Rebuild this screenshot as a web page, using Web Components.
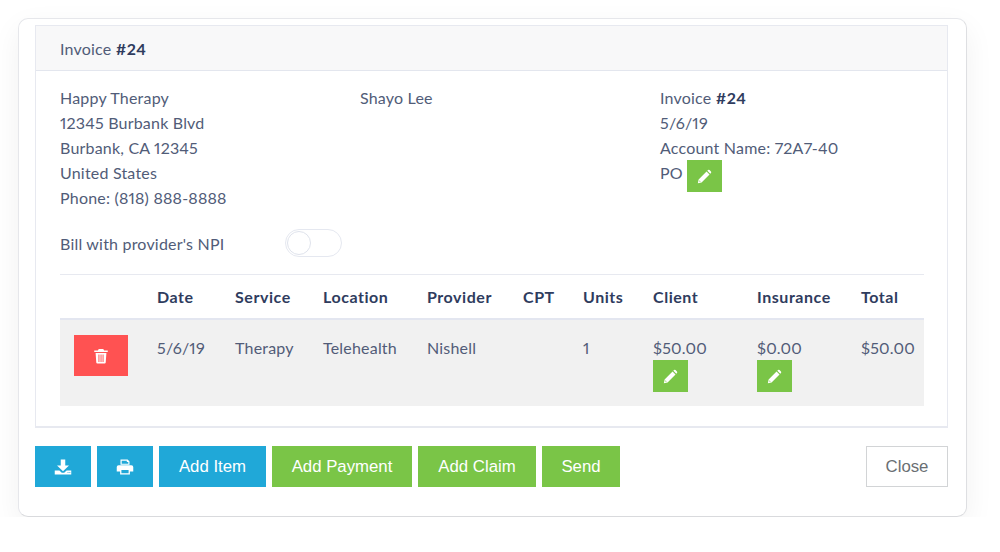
<!DOCTYPE html>
<html>
<head>
<meta charset="utf-8">
<title>Invoice</title>
<style>
    html, body { margin: 0; background: #fff; }
    body {
        font-family: Lato, sans-serif;
        font-size: 16px;
        font-variant-numeric: proportional-nums;
        letter-spacing: .2px;
        color: #515c78;
    }
    b { color: #2f3c5e; font-weight: 700; letter-spacing: .4px; }
</style>
</head>
<body>
<invoice-modal>
    <invoice-panel>
        <span slot="title">Invoice <b>#24</b></span>
        <address-block>
            <div>Happy Therapy</div>
            <div>12345 Burbank Blvd</div>
            <div>Burbank, CA 12345</div>
            <div>United States</div>
            <div>Phone: (818) 888-8888</div>
        </address-block>
        <address-block>
            <div>Shayo Lee</div>
        </address-block>
        <address-block>
            <div>Invoice <b>#24</b></div>
            <div>5/6/19</div>
            <div>Account Name: 72A7-40</div>
            <div class="po">PO <edit-button></edit-button></div>
        </address-block>
        <npi-toggle slot="toggle">Bill with provider's NPI</npi-toggle>
        <invoice-table slot="table"></invoice-table>
    </invoice-panel>
    <action-button slot="left" color="blue" icon="download" size="56"></action-button>
    <action-button slot="left" color="blue" icon="print" size="56"></action-button>
    <action-button slot="left" color="blue" size="107">Add Item</action-button>
    <action-button slot="left" color="green" size="140">Add Payment</action-button>
    <action-button slot="left" color="green" size="118">Add Claim</action-button>
    <action-button slot="left" color="green" size="78">Send</action-button>
    <action-button slot="right" color="plain" size="82">Close</action-button>
</invoice-modal>

<script>
const icons = {
    pencil: '<path d="M2.6 21.4l1.1-5.3L14.9 4.9l4.2 4.2L7.9 20.3zM4.7 19.3l1.9-.4-1.5-1.5zM16 3.8l.9-.9a1.6 1.6 0 0 1 2.2 0l2 2a1.6 1.6 0 0 1 0 2.2l-.9.9z" fill-rule="evenodd"/>',
    trash: '<path d="M9 2.5h6l1.2 2.3H21v2H3v-2h4.8zM4.8 8h14.4l-.9 12.6a1.5 1.5 0 0 1-1.5 1.4H7.2a1.5 1.5 0 0 1-1.5-1.4zM8.6 10v10h1.3V10zM11.4 10v10h1.3V10zM14.1 10v10h1.3V10z" fill-rule="evenodd"/>',
    download: '<path d="M9 2h6v8h5l-8 7.5L4 10h5zM1 16.5h6.2l3.2 3h3.2l3.2-3H23V22H1zM18 19v1h1.4v-1zM20.4 19v1h1.4v-1z" fill-rule="evenodd"/>',
    print: '<path d="M6 2h9.5L18 4.5V9H6zM7.6 3.6v3.9h8.8V5.2h-2V3.6zM3.5 9.5h17A2.5 2.5 0 0 1 23 12v6h-4.5v4h-13v-4H1v-6a2.5 2.5 0 0 1 2.5-2.5zM7.2 16v4.4h9.6V16z" fill-rule="evenodd"/>'
};
const svgIcon = (name, size) => `<svg viewBox="0 0 24 24" width="${size}" height="${size}" fill="#fff">${icons[name]}</svg>`;

class InvoiceModal extends HTMLElement {
    constructor() {
        super();
        this.attachShadow({mode: 'open'});
        this.shadowRoot.innerHTML = `
<style>
    :host {
        display: block;
        box-sizing: border-box;
        width: 949px;
        height: 499px;
        margin: 18px 0 0 18px;
        padding: 6px 18px 0 16px;
        background: #fff;
        border: 1px solid #e6e7eb;
        border-bottom-color: #d9dadd;
        border-right-color: #dedfe2;
        border-radius: 10px;
        box-shadow: 0 10px 30px rgba(0,0,0,.06);
    }
    .actions {
        display: flex;
        justify-content: space-between;
        margin-top: 18px;
    }
    .group { display: flex; gap: 6px; }
</style>
<slot></slot>
<div class="actions">
    <div class="group"><slot name="left"></slot></div>
    <div class="group"><slot name="right"></slot></div>
</div>`;
    }
}

class InvoicePanel extends HTMLElement {
    constructor() {
        super();
        this.attachShadow({mode: 'open'});
        this.shadowRoot.innerHTML = `
<style>
    :host {
        display: block;
        box-sizing: border-box;
        height: 403px;
        border: 1px solid #e7e9f0;
        border-bottom-width: 2px;
    }
    header {
        box-sizing: border-box;
        height: 45px;
        padding: 0 24px;
        display: flex;
        align-items: center;
        background: #f8f8f9;
        border-bottom: 1px solid #e3e6ee;
    }
    .body { padding: 14px 23px 0 24px; }
    .columns { display: grid; grid-template-columns: 300px 300px 1fr; }
</style>
<header><slot name="title"></slot></header>
<div class="body">
    <div class="columns"><slot></slot></div>
    <slot name="toggle"></slot>
    <slot name="table"></slot>
</div>`;
    }
}

class AddressBlock extends HTMLElement {
    constructor() {
        super();
        this.attachShadow({mode: 'open'});
        this.shadowRoot.innerHTML = `
<style>
    :host { display: block; line-height: 25px; }
    ::slotted(.po) { display: flex; align-items: flex-start; gap: 4px; }
</style>
<slot></slot>`;
    }
}

class EditButton extends HTMLElement {
    constructor() {
        super();
        this.attachShadow({mode: 'open'});
        this.shadowRoot.innerHTML = `
<style>
    :host {
        display: inline-flex;
        align-items: center;
        justify-content: center;
        width: 35px;
        height: 32px;
        background: #7ac547;
        vertical-align: middle;
    }
</style>
${svgIcon('pencil', 17)}`;
    }
}

class NpiToggle extends HTMLElement {
    constructor() {
        super();
        this.attachShadow({mode: 'open'});
        this.shadowRoot.innerHTML = `
<style>
    :host {
        display: flex;
        align-items: center;
        height: 28px;
        margin-top: 19px;
    }
    .label { width: 225px; }
    .track {
        box-sizing: border-box;
        width: 57px;
        height: 28px;
        padding: 1px;
        background: #fff;
        border: 1px solid #e5e8f0;
        border-radius: 14px;
    }
    .knob {
        box-sizing: border-box;
        width: 24px;
        height: 24px;
        background: #fff;
        border: 1px solid #dfe3ec;
        border-radius: 50%;
    }
</style>
<div class="label"><slot></slot></div>
<div class="track"><div class="knob"></div></div>`;
    }
}

class InvoiceTable extends HTMLElement {
    constructor() {
        super();
        this.attachShadow({mode: 'open'});
        const heads = ['', 'Date', 'Service', 'Location', 'Provider', 'CPT', 'Units', 'Client', 'Insurance', 'Total'];
        const cells = ['5/6/19', 'Therapy', 'Telehealth', 'Nishell', '', '1'];
        this.shadowRoot.innerHTML = `
<style>
    :host {
        display: block;
        margin-top: 17px;
        border-top: 1px solid #e7e9f0;
    }
    .row {
        display: grid;
        grid-template-columns: 97px 78px 88px 104px 96px 60px 70px 104px 104px 63px;
    }
    .head {
        height: 45px;
        align-items: center;
        font-weight: 700;
        letter-spacing: .55px;
        color: #2f3c5e;
        border-bottom: 2px solid #e3e6f0;
        box-sizing: border-box;
    }
    .line { height: 86px; background: #f1f1f1; }
    .line > div { padding-top: 15px; line-height: 25px; }
    .line > .del { padding: 15px 0 0 14px; }
    .del button {
        display: flex;
        align-items: center;
        justify-content: center;
        width: 54px;
        height: 41px;
        padding: 0;
        background: #ff5252;
        border: 0;
    }
    edit-button { display: flex; }
</style>
<div class="row head">${heads.map(h => `<div>${h}</div>`).join('')}</div>
<div class="row line">
    <div class="del"><button>${svgIcon('trash', 18)}</button></div>
    ${cells.map(c => `<div>${c}</div>`).join('')}
    <div>$50.00<edit-button></edit-button></div>
    <div>$0.00<edit-button></edit-button></div>
    <div>$50.00</div>
</div>`;
    }
}

class ActionButton extends HTMLElement {
    constructor() {
        super();
        this.attachShadow({mode: 'open'});
        const icon = this.getAttribute('icon');
        const bg = {blue: '#20a8d8', green: '#7ac547', plain: '#fff'}[this.getAttribute('color')];
        const plain = this.getAttribute('color') == 'plain';
        this.shadowRoot.innerHTML = `
<style>
    :host {
        display: flex;
        align-items: center;
        justify-content: center;
        box-sizing: border-box;
        width: ${this.getAttribute('size')}px;
        height: 41px;
        background: ${bg};
        color: ${plain ? '#6a6f73' : '#fff'};
        border: ${plain ? '1px solid #d2d4d6' : '0'};
        font-family: "Liberation Sans", Arial, sans-serif;
        font-size: 16.8px;
        letter-spacing: 0;
    }
</style>
${icon ? svgIcon(icon, 18) : '<slot></slot>'}`;
    }
}

customElements.define('edit-button', EditButton);
customElements.define('npi-toggle', NpiToggle);
customElements.define('address-block', AddressBlock);
customElements.define('invoice-table', InvoiceTable);
customElements.define('action-button', ActionButton);
customElements.define('invoice-panel', InvoicePanel);
customElements.define('invoice-modal', InvoiceModal);
</script>
</body>
</html>
